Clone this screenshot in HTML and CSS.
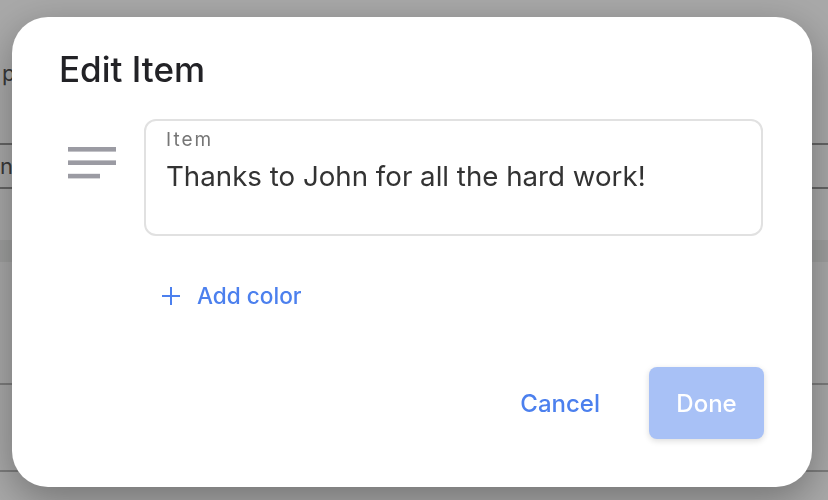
FILE: index.html
```html
<!DOCTYPE html>
<html>
<head>
<meta charset="utf-8">
<link rel="stylesheet" href="styles.css">
</head>
<body>
<div class="page">
  <div class="page-head">p</div>
  <div class="page-search">n</div>
  <div class="page-band"></div>
  <div class="page-row"></div>
  <div class="page-row page-row-last"></div>
</div>
<div class="scrim">
  <div class="dialog">
    <h1 class="title">Edit Item</h1>
    <div class="field-row">
      <svg class="notes-icon" width="48" height="32" viewBox="0 0 48 32">
        <rect x="0" y="0" width="48" height="4.6" fill="#9b9ba3"/>
        <rect x="0" y="13.4" width="48" height="4.6" fill="#9b9ba3"/>
        <rect x="0" y="26.8" width="32" height="4.6" fill="#9b9ba3"/>
      </svg>
      <div class="field">
        <div class="field-label">Item</div>
        <div class="field-value">Thanks to John for all the hard work!</div>
      </div>
    </div>
    <div class="add-color">
      <svg class="plus" width="20" height="20" viewBox="0 0 20 20">
        <path d="M10 1 V19 M1 10 H19" stroke="#4c80ee" stroke-width="2" fill="none"/>
      </svg>
      <span>Add color</span>
    </div>
    <div class="footer">
      <button class="btn btn-text">Cancel</button>
      <button class="btn btn-primary">Done</button>
    </div>
  </div>
</div>
</body>
</html>
```

FILE: styles.css
```css
html, body {
  margin: 0;
  padding: 0;
}
body {
  width: 828px;
  height: 500px;
  overflow: hidden;
  background: #ffffff;
  font-family: Inter, "Noto Sans", sans-serif;
}
.page {
  display: flex;
  flex-direction: column;
}
.page-head {
  margin-top: 58px;
  height: 30px;
  padding-left: 2px;
  font-size: 22px;
  color: #555;
  line-height: 30px;
}
.page-search {
  margin-top: 55px;
  height: 42px;
  border-top: 2px solid #999;
  border-bottom: 2px solid #999;
  font-size: 22px;
  line-height: 42px;
  color: #555;
}
.page-band {
  margin-top: 51px;
  height: 22px;
  background: #f0f1f0;
}
.page-row {
  margin-top: 121px;
  height: 0;
  border-top: 2px solid #bcbcbc;
}
.page-row-last {
  margin-top: 85px;
}
.scrim {
  position: fixed;
  inset: 0;
  background: rgba(0, 0, 0, 0.34);
  display: flex;
  padding: 17px 16px 13px 12px;
}
.dialog {
  flex: 1;
  background: #ffffff;
  border-radius: 36px;
  box-shadow: 0 12px 40px rgba(0, 0, 0, 0.32);
  display: flex;
  flex-direction: column;
  padding: 31px 48px 48px 47px;
}
.title {
  margin: 0;
  font-size: 35px;
  line-height: 42px;
  font-weight: 500;
  color: #222226;
}
.field-row {
  margin-top: 29px;
  margin-left: 9px;
  display: flex;
  align-items: flex-start;
  gap: 28px;
}
.notes-icon {
  margin-top: 28px;
  flex: none;
}
.field {
  flex: 1;
  height: 117px;
  box-sizing: border-box;
  border: 2px solid #e1e1e1;
  border-radius: 12px;
  padding: 8px 18px 0 20px;
  margin-right: 1px;
}
.field-label {
  font-size: 19px;
  line-height: 22px;
  letter-spacing: 2px;
  color: #767676;
}
.field-value {
  margin-top: 8px;
  font-size: 27.7px;
  line-height: 34px;
  color: #333333;
}
.add-color {
  margin-top: 46px;
  margin-left: 102px;
  display: flex;
  align-items: center;
  gap: 16px;
  color: #4c80ee;
  font-size: 22.6px;
  line-height: 28px;
  font-weight: 500;
}
.footer {
  margin-top: auto;
  display: flex;
  justify-content: flex-end;
  gap: 22px;
}
.btn {
  height: 72px;
  padding: 0 27px;
  border: none;
  border-radius: 8px;
  font-family: Inter, "Noto Sans", sans-serif;
  font-size: 24px;
  font-weight: 500;
  background: transparent;
}
.btn-text {
  color: #4c80ee;
}
.btn-primary {
  width: 115px;
  padding: 0;
  background: #a8c1f6;
  color: #ffffff;
  box-shadow: 0 2px 6px rgba(0, 0, 0, 0.14);
}
```
